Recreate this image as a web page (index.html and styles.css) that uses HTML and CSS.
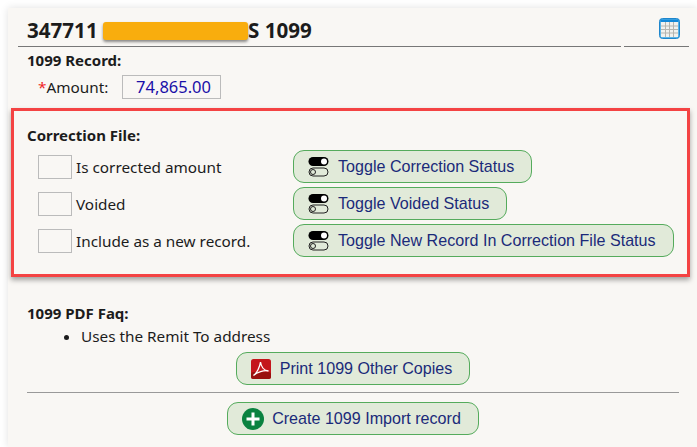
FILE: index.html
```html
<!DOCTYPE html>
<html lang="en">
<head>
    <meta charset="UTF-8">
    <meta name="viewport" content="width=device-width, initial-scale=1.0">
    <title>1099 Record</title>
    <link rel="stylesheet" href="styles.css">
</head>
<body>
    <main class="panel">
        <div class="title-row">
            <h1 class="page-title">347711 <span class="redacted"></span>S 1099</h1>
            <div class="title-tools">
                <svg class="calendar-icon" width="21" height="21" viewBox="0 0 21 21">
                    <rect x="0.5" y="0.5" width="20" height="20" rx="3" fill="#5ab4e8" stroke="#1f86cc"/>
                    <rect x="2" y="4" width="17" height="15" fill="#f1f1ee"/>
                    <path d="M2 8h17M2 11.500h17M2 15h17M6.500 4v15M10.500 4v15M14.500 4v15" stroke="#b5b5b0" stroke-width="1" fill="none"/>
                    <rect x="1.500" y="1.500" width="18" height="2.500" fill="#1388d8"/>
                </svg>
            </div>
        </div>

        <section class="record">
            <div class="section-label">1099 Record:</div>
            <div class="amount-row">
                <label class="amount-label"><span class="required">*</span>Amount:</label>
                <div class="amount-input">74,865.00</div>
            </div>
        </section>

        <section class="correction-box">
            <div class="section-label">Correction File:</div>
            <div class="correction-row">
                <div class="check-group"><span class="check-box"></span><span>Is corrected amount</span></div>
                <button class="btn">
                    <svg class="toggle-icon" width="21" height="21" viewBox="0 0 21 21">
                        <rect x="0.500" y="1" width="20" height="9" rx="4.500" fill="#000"/>
                        <circle cx="16" cy="5.500" r="3" fill="#fff"/>
                        <rect x="1" y="12" width="19" height="8" rx="4" fill="none" stroke="#222" stroke-width="1"/>
                        <circle cx="5" cy="16" r="2.500" fill="none" stroke="#222" stroke-width="1"/>
                    </svg>
                    Toggle Correction Status
                </button>
            </div>
            <div class="correction-row">
                <div class="check-group"><span class="check-box"></span><span>Voided</span></div>
                <button class="btn">
                    <svg class="toggle-icon" width="21" height="21" viewBox="0 0 21 21">
                        <rect x="0.500" y="1" width="20" height="9" rx="4.500" fill="#000"/>
                        <circle cx="16" cy="5.500" r="3" fill="#fff"/>
                        <rect x="1" y="12" width="19" height="8" rx="4" fill="none" stroke="#222" stroke-width="1"/>
                        <circle cx="5" cy="16" r="2.500" fill="none" stroke="#222" stroke-width="1"/>
                    </svg>
                    Toggle Voided Status
                </button>
            </div>
            <div class="correction-row">
                <div class="check-group"><span class="check-box"></span><span>Include as a new record.</span></div>
                <button class="btn">
                    <svg class="toggle-icon" width="21" height="21" viewBox="0 0 21 21">
                        <rect x="0.500" y="1" width="20" height="9" rx="4.500" fill="#000"/>
                        <circle cx="16" cy="5.500" r="3" fill="#fff"/>
                        <rect x="1" y="12" width="19" height="8" rx="4" fill="none" stroke="#222" stroke-width="1"/>
                        <circle cx="5" cy="16" r="2.500" fill="none" stroke="#222" stroke-width="1"/>
                    </svg>
                    Toggle New Record In Correction File Status
                </button>
            </div>
        </section>

        <section class="faq">
            <div class="section-label">1099 PDF Faq:</div>
            <ul class="faq-list">
                <li>Uses the Remit To address</li>
            </ul>
            <div class="center-row">
                <button class="btn">
                    <svg class="pdf-icon" width="20" height="20" viewBox="0 0 20 20">
                        <rect width="20" height="20" rx="2.500" fill="#c4161c"/>
                        <rect y="13" width="20" height="7" rx="2.500" fill="#99100f"/>
                        <path d="M2.500 16.500C6 14.500 9 7 9.500 3C10 7 12.500 11.500 17.500 12C13 11 6 13 2.500 16.500Z" fill="none" stroke="#fff" stroke-width="1.300"/>
                    </svg>
                    Print 1099 Other Copies
                </button>
            </div>
            <hr class="divider">
            <div class="center-row">
                <button class="btn btn-create">
                    <svg class="plus-icon" width="22" height="22" viewBox="0 0 22 22">
                        <circle cx="11" cy="11" r="11" fill="#0a8240"/>
                        <path d="M11 4.500v13M4.500 11h13" stroke="#fff" stroke-width="3" fill="none"/>
                    </svg>
                    Create 1099 Import record
                </button>
            </div>
        </section>
    </main>
</body>
</html>
```

FILE: styles.css
```css
/* Base styles */
* {
    margin: 0;
    padding: 0;
    box-sizing: border-box;
}

body {
    font-family: 'Noto Sans', 'Lato', sans-serif;
    font-size: 15.3px;
    color: #1c1c1c;
    background: #ffffff;
    overflow: hidden;
}

.panel {
    margin: 8px 0 0 8px;
    height: 439px;
    padding-top: 9px;
    background: #f9f7f4;
    box-shadow: 0 0 8px rgba(0,0,0,0.12);
}

/* Title */
.title-row {
    display: flex;
    gap: 3px;
    margin: 0 8px 0 10px;
    height: 30px;
}

.page-title {
    flex: 1;
    padding-left: 9px;
    font-size: 20.6px;
    font-weight: 700;
    line-height: 27px;
    border-bottom: 1px solid #777;
    height: 30px;
}

.redacted {
    display: inline-block;
    width: 145px;
    height: 18px;
    vertical-align: -2px;
    background: #f9ad0d;
    border-radius: 3px;
    box-shadow: 0 2px 3px rgba(0,0,0,0.45);
}

.title-tools {
    width: 65px;
    border-bottom: 1px solid #777;
    display: flex;
    justify-content: flex-end;
    padding-right: 9px;
}

.calendar-icon {
    margin-top: 1px;
}

.section-label {
    font-size: 15px;
    font-weight: 700;
    line-height: 20px;
}

/* Record */
.record {
    padding: 3px 0 0 19px;
}

.amount-row {
    display: flex;
    align-items: center;
    margin-top: 5px;
    padding-left: 11px;
}

.amount-label {
    width: 84px;
}

.required {
    color: #f01f1f;
}

.amount-input {
    width: 99px;
    height: 24px;
    line-height: 22px;
    border: 1px solid #bbb;
    text-align: right;
    padding-right: 9px;
    font-size: 16.5px;
    color: #1a10a8;
}

/* Correction box */
.correction-box {
    margin: 9px 7px 0 3px;
    height: 169px;
    padding: 14px 0 0 13px;
    border: 3px solid #f44343;
    box-shadow: 0 3px 5px rgba(0,0,0,0.35);
}

.correction-box .section-label {
    margin-bottom: 5px;
}

.correction-row {
    display: flex;
    align-items: center;
    height: 33px;
    margin-top: 4px;
}

.check-group {
    display: flex;
    align-items: center;
    gap: 4px;
    width: 266px;
    padding-left: 11px;
}

.check-box {
    width: 34px;
    height: 24px;
    border: 1px solid #bbb;
}

/* Buttons */
.btn {
    display: inline-flex;
    align-items: center;
    height: 33px;
    padding: 0 17px 0 14px;
    font-family: 'Liberation Sans', Arial, sans-serif;
    font-size: 16.1px;
    color: #1b2a7a;
    background: #e1ead9;
    border: 1px solid #55ab5c;
    border-radius: 11px;
}

.btn svg {
    margin-right: 9px;
    flex: none;
}

.btn-create svg {
    margin-right: 8px;
}

/* FAQ */
.faq {
    padding: 26px 18px 0 19px;
}

.faq-list {
    margin-left: 54px;
    margin-bottom: 3px;
    line-height: 26px;
}

.center-row {
    display: flex;
    justify-content: center;
}

.divider {
    border: none;
    border-top: 1px solid #999;
    margin: 7px 0 9px;
}
```
